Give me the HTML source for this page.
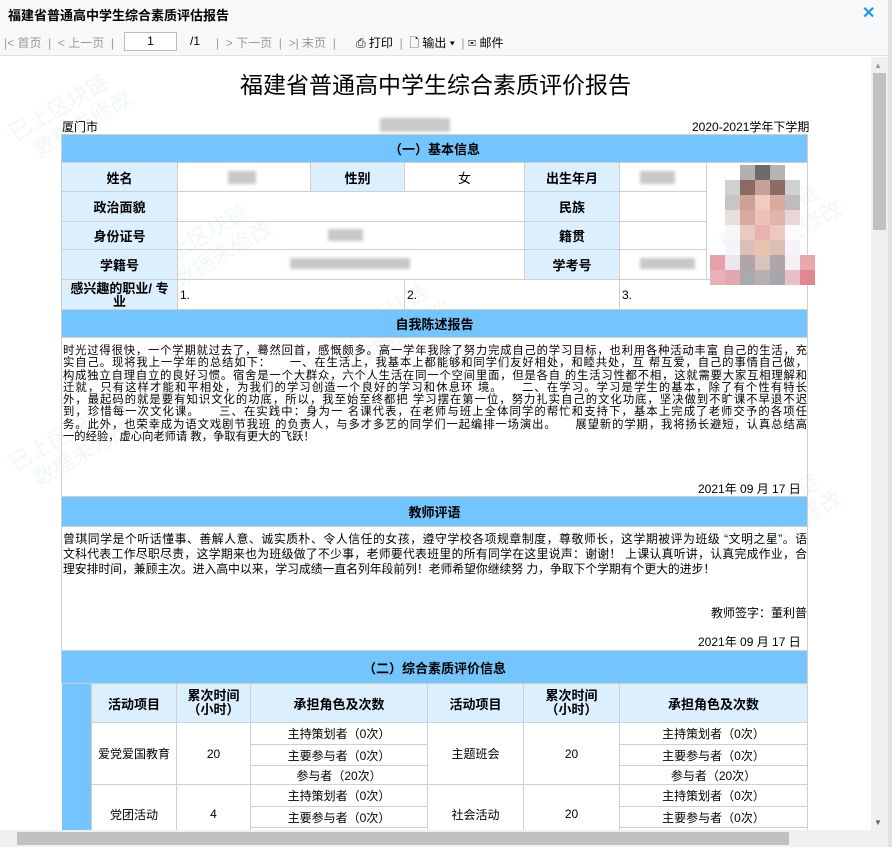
<!DOCTYPE html>
<html><head><meta charset="utf-8"><style>
*{margin:0;padding:0;box-sizing:border-box}
body{width:892px;height:847px;overflow:hidden;background:#fff;font-family:"Liberation Sans","Noto Sans CJK SC",sans-serif;font-size:12px;color:#000;position:relative}
.a{position:absolute}
.c{position:absolute;display:flex;align-items:center;justify-content:center;text-align:center;border:1px solid #cfcfcf;margin:-1px 0 0 -1px}
.h{background:#74c4fd;font-weight:bold;font-size:13px}
.l{background:#dcefff;font-weight:bold;font-size:13px}
.p div{text-align:justify;text-align-last:justify;white-space:nowrap;height:12.3px;line-height:12.3px}
.p div.last{text-align-last:left}
.blur{position:absolute;background:#c8c8c8;filter:blur(1.5px)}
.wm{position:absolute;color:#f1f8f4;font-size:22px;transform:rotate(-30deg);white-space:nowrap;line-height:26px;pointer-events:none}
</style></head><body>
<div class="a" style="left:0;top:0;width:892px;height:56px;background:#f7f8fa;border-bottom:1px solid #e2e2e2"></div>
<div class="a" style="left:8px;top:5px;font-weight:bold;font-size:13px">福建省普通高中学生综合素质评估报告</div>
<div class="a" style="left:862px;top:3px;color:#1a9be0;font-size:16px;font-weight:bold">✕</div>
<div class="a" style="left:4px;top:34px;color:#999;font-size:12px;white-space:nowrap">|&lt; 首页 &nbsp;| &nbsp;&lt; 上一页 &nbsp;|</div>
<div class="a" style="left:124px;top:32px;width:53px;height:19px;border:1px solid #bbb;background:#fff;text-align:center;line-height:17px">1</div>
<div class="a" style="left:190px;top:34px">/1</div>
<div class="a" style="left:216px;top:34px;color:#999;white-space:nowrap">| &nbsp;&gt; 下一页 &nbsp;| &nbsp;&gt;| 末页 &nbsp;|</div>
<div class="a" style="left:356px;top:34px;white-space:nowrap">⎙ 打印 <span style="color:#999">&nbsp;|</span> &nbsp;🗋 输出 ▾ <span style="color:#999">&nbsp;|</span> ✉ 邮件</div>

<div class="a" style="left:871px;top:57px;width:17px;height:773px;background:#f0f0f0"></div>
<div class="a" style="left:873px;top:73px;width:13px;height:157px;background:#c1c1c1"></div>
<div class="a" style="left:874px;top:61px;color:#999;font-size:8px">▲</div>
<div class="a" style="left:874px;top:818px;color:#666;font-size:8px">▼</div>
<div class="a" style="left:888px;top:0;width:4px;height:847px;background:#dfe3e8"></div>

<div class="wm" style="left:150px;top:220px">已上区块链<br>&nbsp;&nbsp;数据未修改</div>
<div class="wm" style="left:720px;top:200px">已上区块链<br>&nbsp;&nbsp;数据未修改</div>
<div class="wm" style="left:330px;top:300px">已上区块链<br>&nbsp;&nbsp;数据未修改</div>
<div class="wm" style="left:10px;top:420px">已上区块链<br>&nbsp;&nbsp;数据未修改</div>
<div class="wm" style="left:720px;top:490px">已上区块链<br>&nbsp;&nbsp;数据未修改</div>
<div class="wm" style="left:10px;top:90px">已上区块链<br>&nbsp;&nbsp;数据未修改</div>

<div class="a" style="left:0;top:66px;width:871px;text-align:center;font-size:23px">福建省普通高中学生综合素质评价报告</div>
<div class="a" style="left:62px;top:118px">厦门市</div>
<div class="blur" style="left:380px;top:118px;width:70px;height:14px"></div>
<div class="a" style="left:692px;top:118px">2020-2021学年下学期</div>

<div class="c h" style="left:62px;top:135px;width:747px;height:29px">（一）基本信息</div>
<div class="c l" style="left:62px;top:163px;width:117px;height:30px">姓名</div>
<div class="c" style="left:178px;top:163px;width:134px;height:30px"></div>
<div class="c l" style="left:311px;top:163px;width:95px;height:30px">性别</div>
<div class="c" style="left:405px;top:163px;width:121px;height:30px;font-size:13px">女</div>
<div class="c l" style="left:525px;top:163px;width:96px;height:30px">出生年月</div>
<div class="c" style="left:620px;top:163px;width:88px;height:30px"></div>
<div class="c" style="left:707px;top:163px;width:102px;height:118px"></div>
<div class="c l" style="left:62px;top:192px;width:117px;height:31px">政治面貌</div>
<div class="c" style="left:178px;top:192px;width:348px;height:31px"></div>
<div class="c l" style="left:525px;top:192px;width:96px;height:31px">民族</div>
<div class="c" style="left:620px;top:192px;width:88px;height:31px"></div>
<div class="c l" style="left:62px;top:222px;width:117px;height:29px">身份证号</div>
<div class="c" style="left:178px;top:222px;width:348px;height:29px"></div>
<div class="c l" style="left:525px;top:222px;width:96px;height:29px">籍贯</div>
<div class="c" style="left:620px;top:222px;width:88px;height:29px"></div>
<div class="c l" style="left:62px;top:250px;width:117px;height:31px">学籍号</div>
<div class="c" style="left:178px;top:250px;width:348px;height:31px"></div>
<div class="c l" style="left:525px;top:250px;width:96px;height:31px">学考号</div>
<div class="c" style="left:620px;top:250px;width:88px;height:31px"></div>
<div class="c l" style="left:62px;top:280px;width:117px;height:31px;line-height:13px">感兴趣的职业/ 专<br>业</div>
<div class="c" style="left:178px;top:280px;width:228px;height:31px;justify-content:flex-start;padding-left:2px">1.</div>
<div class="c" style="left:405px;top:280px;width:216px;height:31px;justify-content:flex-start;padding-left:2px">2.</div>
<div class="c" style="left:620px;top:280px;width:189px;height:31px;justify-content:flex-start;padding-left:2px">3.</div>
<div class="blur" style="left:228px;top:171px;width:28px;height:13px"></div>
<div class="blur" style="left:640px;top:171px;width:35px;height:13px"></div>
<div class="blur" style="left:328px;top:229px;width:35px;height:12px"></div>
<div class="blur" style="left:290px;top:258px;width:120px;height:11px"></div>
<div class="blur" style="left:640px;top:258px;width:55px;height:11px"></div>
<div class="a" style="left:710px;top:165px;width:105px;height:120px;display:grid;grid-template-columns:repeat(7,15px);grid-template-rows:repeat(8,15px)">
<i></i><i></i><i style="background:#b0b0b0"></i><i style="background:#6b6b6b"></i><i style="background:#b4b4b4"></i><i></i><i></i>
<i></i><i style="background:#d0d0d0"></i><i style="background:#8a6a64"></i><i style="background:#c9a096"></i><i style="background:#8b6b66"></i><i style="background:#d0d0d0"></i><i></i>
<i></i><i style="background:#c9c5c5"></i><i style="background:#cfa196"></i><i style="background:#f0cbc0"></i><i style="background:#d9ab9f"></i><i style="background:#c0bcbd"></i><i></i>
<i></i><i style="background:#e8e0de"></i><i style="background:#d6aaa0"></i><i style="background:#ecc2b8"></i><i style="background:#e0b4ab"></i><i style="background:#ead6d6"></i><i></i>
<i></i><i style="background:#f8f6f6"></i><i style="background:#eac9c0"></i><i style="background:#e8b2b0"></i><i style="background:#ecc8c0"></i><i style="background:#fbfbfb"></i><i></i>
<i></i><i style="background:#f5f4f8"></i><i style="background:#dcc0b8"></i><i style="background:#e8c4b0"></i><i style="background:#dcc0b8"></i><i style="background:#f6f4f8"></i><i></i>
<i style="background:#e8a0a8"></i><i style="background:#ece6ee"></i><i style="background:#b0a6a8"></i><i style="background:#d8c4bc"></i><i style="background:#b0a6a8"></i><i style="background:#f4f0f6"></i><i style="background:#e8a8b0"></i>
<i style="background:#e8b0b8"></i><i style="background:#e0a8b0"></i><i style="background:#aaaaaa"></i><i style="background:#b4b0b4"></i><i style="background:#a8a6aa"></i><i style="background:#e8c0c8"></i><i style="background:#e08890"></i>
</div>

<div class="c h" style="left:62px;top:310px;width:747px;height:29px">自我陈述报告</div>
<div class="c" style="left:62px;top:338px;width:747px;height:160px;background:transparent"></div>
<div class="a p" style="left:63px;top:345px;width:744px;font-size:11.3px">
<div>时光过得很快，一个学期就过去了，蓦然回首，感慨颇多。高一学年我除了努力完成自己的学习目标，也利用各种活动丰富 自己的生活，充</div>
<div>实自己。现将我上一学年的总结如下：　　一、在生活上，我基本上都能够和同学们友好相处，和睦共处，互 帮互爱，自己的事情自己做，</div>
<div>构成独立自理自立的良好习惯。宿舍是一个大群众，六个人生活在同一个空间里面，但是各自 的生活习性都不相，这就需要大家互相理解和</div>
<div>迁就，只有这样才能和平相处，为我们的学习创造一个良好的学习和休息环 境。　　二、在学习。学习是学生的基本，除了有个性有特长</div>
<div>外，最起码的就是要有知识文化的功底，所以，我至始至终都把 学习摆在第一位，努力扎实自己的文化功底，坚决做到不旷课不早退不迟</div>
<div>到，珍惜每一次文化课。　　三、在实践中：身为一 名课代表，在老师与班上全体同学的帮忙和支持下，基本上完成了老师交予的各项任</div>
<div>务。此外，也荣幸成为语文戏剧节我班 的负责人，与多才多艺的同学们一起编排一场演出。　　展望新的学期，我将扬长避短，认真总结高</div>
<div class="last">一的经验，虚心向老师请 教，争取有更大的飞跃！</div>
</div>
<div class="a" style="left:698px;top:480px">2021年 09 月 17 日</div>

<div class="c h" style="left:62px;top:497px;width:747px;height:31px">教师评语</div>
<div class="c" style="left:62px;top:527px;width:747px;height:125px;background:transparent"></div>
<div class="a p" style="left:63px;top:532px;width:744px;font-size:11.8px">
<div style="height:15px;line-height:15px">曾琪同学是个听话懂事、善解人意、诚实质朴、令人信任的女孩，遵守学校各项规章制度，尊敬师长，这学期被评为班级 “文明之星”。语</div>
<div style="height:15px;line-height:15px">文科代表工作尽职尽责，这学期来也为班级做了不少事，老师要代表班里的所有同学在这里说声：谢谢！ 上课认真听讲，认真完成作业，合</div>
<div class="last" style="height:15px;line-height:15px">理安排时间，兼顾主次。进入高中以来，学习成绩一直名列年段前列！老师希望你继续努 力，争取下个学期有个更大的进步！</div>
</div>
<div class="a" style="left:711px;top:604px">教师签字：董利普</div>
<div class="a" style="left:698px;top:633px">2021年 09 月 17 日</div>

<div class="c h" style="left:62px;top:651px;width:747px;height:34px">（二）综合素质评价信息</div>
<div class="a" style="left:62px;top:684px;width:30px;height:146px;background:#74c4fd"></div>
<div class="c l" style="left:92px;top:684px;width:86px;height:40px">活动项目</div>
<div class="c l" style="left:177px;top:684px;width:75px;height:40px;line-height:14px">累次时间<br>（小时）</div>
<div class="c l" style="left:251px;top:684px;width:178px;height:40px">承担角色及次数</div>
<div class="c l" style="left:428px;top:684px;width:97px;height:40px">活动项目</div>
<div class="c l" style="left:524px;top:684px;width:97px;height:40px;line-height:14px">累次时间<br>（小时）</div>
<div class="c l" style="left:620px;top:684px;width:189px;height:40px">承担角色及次数</div>

<div class="c" style="left:92px;top:723px;width:86px;height:63px">爱党爱国教育</div>
<div class="c" style="left:177px;top:723px;width:75px;height:63px">20</div>
<div class="c" style="left:251px;top:723px;width:178px;height:23px">主持策划者（0次）</div>
<div class="c" style="left:251px;top:745px;width:178px;height:22px">主要参与者（0次）</div>
<div class="c" style="left:251px;top:766px;width:178px;height:20px">参与者（20次）</div>
<div class="c" style="left:428px;top:723px;width:97px;height:63px">主题班会</div>
<div class="c" style="left:524px;top:723px;width:97px;height:63px">20</div>
<div class="c" style="left:620px;top:723px;width:189px;height:23px">主持策划者（0次）</div>
<div class="c" style="left:620px;top:745px;width:189px;height:22px">主要参与者（0次）</div>
<div class="c" style="left:620px;top:766px;width:189px;height:20px">参与者（20次）</div>

<div class="c" style="left:92px;top:785px;width:86px;height:60px">党团活动</div>
<div class="c" style="left:177px;top:785px;width:75px;height:60px">4</div>
<div class="c" style="left:251px;top:785px;width:178px;height:23px">主持策划者（0次）</div>
<div class="c" style="left:251px;top:807px;width:178px;height:22px">主要参与者（0次）</div>
<div class="c" style="left:251px;top:828px;width:178px;height:20px"></div>
<div class="c" style="left:428px;top:785px;width:97px;height:60px">社会活动</div>
<div class="c" style="left:524px;top:785px;width:97px;height:60px">20</div>
<div class="c" style="left:620px;top:785px;width:189px;height:23px">主持策划者（0次）</div>
<div class="c" style="left:620px;top:807px;width:189px;height:22px">主要参与者（0次）</div>
<div class="c" style="left:620px;top:828px;width:189px;height:20px"></div>
<div class="a" style="left:0;top:830px;width:888px;height:17px;background:#f0f0f0"></div>
<div class="a" style="left:17px;top:832px;width:772px;height:13px;background:#c1c1c1"></div>
</body></html>
